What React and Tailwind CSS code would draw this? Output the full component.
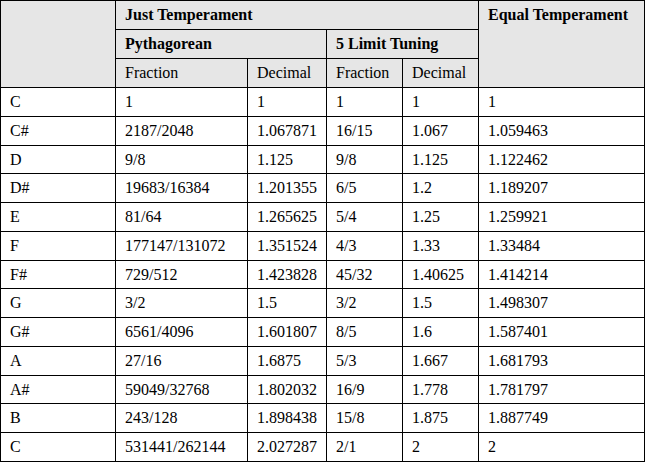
import React from "react";

const rows = [
  ["C", "1", "1", "1", "1", "1"],
  ["C#", "2187/2048", "1.067871", "16/15", "1.067", "1.059463"],
  ["D", "9/8", "1.125", "9/8", "1.125", "1.122462"],
  ["D#", "19683/16384", "1.201355", "6/5", "1.2", "1.189207"],
  ["E", "81/64", "1.265625", "5/4", "1.25", "1.259921"],
  ["F", "177147/131072", "1.351524", "4/3", "1.33", "1.33484"],
  ["F#", "729/512", "1.423828", "45/32", "1.40625", "1.414214"],
  ["G", "3/2", "1.5", "3/2", "1.5", "1.498307"],
  ["G#", "6561/4096", "1.601807", "8/5", "1.6", "1.587401"],
  ["A", "27/16", "1.6875", "5/3", "1.667", "1.681793"],
  ["A#", "59049/32768", "1.802032", "16/9", "1.778", "1.781797"],
  ["B", "243/128", "1.898438", "15/8", "1.875", "1.887749"],
  ["C", "531441/262144", "2.027287", "2/1", "2", "2"],
];

export default function App() {
  return (
    <div
      className="w-[645px] grid gap-px p-px bg-black text-black text-[16px]"
      style={{
        fontFamily: '"Liberation Serif", "Times New Roman", serif',
        gridTemplateColumns: "114px 131px 78px 75px 75px 165px",
        gridTemplateRows:
          "28px 28px 28px 28px 28px 27px 28px 28px 28px 27px 28px 28px 28px 27px 28px 28px",
      }}
    >
      <div className="row-span-3 bg-[#e6e6e6]" />
      <div className="col-span-4 bg-[#e6e6e6] pl-[9px] leading-[28px] font-bold">
        Just Temperament
      </div>
      <div className="row-span-3 bg-[#e6e6e6] pl-[9px] leading-[28px] font-bold">
        Equal Temperament
      </div>
      <div className="col-span-2 bg-[#e6e6e6] pl-[9px] leading-[28px] font-bold">
        Pythagorean
      </div>
      <div className="col-span-2 bg-[#e6e6e6] pl-[9px] leading-[28px] font-bold">
        5 Limit Tuning
      </div>
      <div className="bg-[#e6e6e6] pl-[9px] leading-[28px]">Fraction</div>
      <div className="bg-[#e6e6e6] pl-[9px] leading-[28px]">Decimal</div>
      <div className="bg-[#e6e6e6] pl-[9px] leading-[28px]">Fraction</div>
      <div className="bg-[#e6e6e6] pl-[9px] leading-[28px]">Decimal</div>
      {rows.map((r, i) =>
        r.map((c, j) => (
          <div key={i + "-" + j} className="bg-white pl-[9px] flex items-center">
            {c}
          </div>
        ))
      )}
    </div>
  );
}
